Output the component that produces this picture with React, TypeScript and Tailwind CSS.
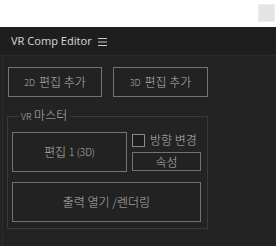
const font = { fontFamily: '"Noto Sans CJK KR", "Noto Sans", sans-serif' };

function PanelButton({
  children,
  className = '',
}: {
  children: React.ReactNode;
  className?: string;
}) {
  return (
    <button
      className={`flex items-center justify-center border border-[#727272] bg-[#222222] text-[12px] font-light leading-none text-[#b4b4b4] ${className}`}
    >
      {children}
    </button>
  );
}

export default function App() {
  return (
    <div className="w-[276px] h-[246px] flex flex-col bg-white overflow-hidden" style={font}>
      {/* host window strip */}
      <div className="h-[27px] flex justify-end items-start pt-[4px] pr-[1px]">
        <div className="w-[17px] h-[18px] bg-[#e4e4e4] border border-[#ececec]" />
      </div>

      {/* panel header */}
      <div className="h-[29px] bg-[#1e1e1e] border-b border-[#2b2b2b] flex items-center pl-[11px] gap-[6px]">
        <span className="text-[11px] text-[#cfcfcf]" style={{ fontFamily: '"Noto Sans", sans-serif' }}>
          VR Comp Editor
        </span>
        <svg width="9" height="8" viewBox="0 0 9 8" className="mt-[1px]">
          <rect x="0" y="0" width="9" height="1" fill="#c8c8c8" />
          <rect x="0" y="3.5" width="9" height="1" fill="#c8c8c8" />
          <rect x="0" y="7" width="9" height="1" fill="#c8c8c8" />
        </svg>
      </div>

      {/* body */}
      <div className="flex-1 bg-[#232323] pl-[2px]">
        <div className="h-full border-l border-[#2c2c2c] pl-[5px]">
          <div className="flex gap-[11px] pt-[11px]">
            <PanelButton className="w-[94px] h-[30px] gap-[4px]">
              <span className="text-[9px]">2D</span> 편집 추가
            </PanelButton>
            <PanelButton className="w-[95px] h-[30px] gap-[4px]">
              <span className="text-[9px]">3D</span> 편집 추가
            </PanelButton>
          </div>

          <fieldset className="mt-[10px] w-[201px] -ml-[1px] border border-[#3a3a3a] pl-[4px] pr-[6px] pb-[6px]">
            <legend className="ml-[7px] px-[2px] text-[12px] font-light leading-[16px] text-[#b4b4b4]">
              <span className="text-[9px]">VR</span> 마스터
            </legend>
            <div className="flex gap-[5px] mt-[7px]">
              <PanelButton className="w-[115px] h-[40px] gap-[3px]">
                편집 <span className="text-[10px]">1 (3D)</span>
              </PanelButton>
              <div className="flex flex-col">
                <label className="flex items-center gap-[5px] h-[14px] mt-[1px] text-[12px] font-light text-[#b4b4b4]">
                  <span className="w-[13px] h-[13px] border border-[#8a8a8a] bg-[#1c1c1c]" />
                  방향 변경
                </label>
                <PanelButton className="w-[69px] h-[19px] mt-[5px]">속성</PanelButton>
              </div>
            </div>
            <PanelButton className="w-[189px] h-[40px] mt-[10px]">출력 열기 /렌더링</PanelButton>
          </fieldset>
        </div>
      </div>
    </div>
  );
}
